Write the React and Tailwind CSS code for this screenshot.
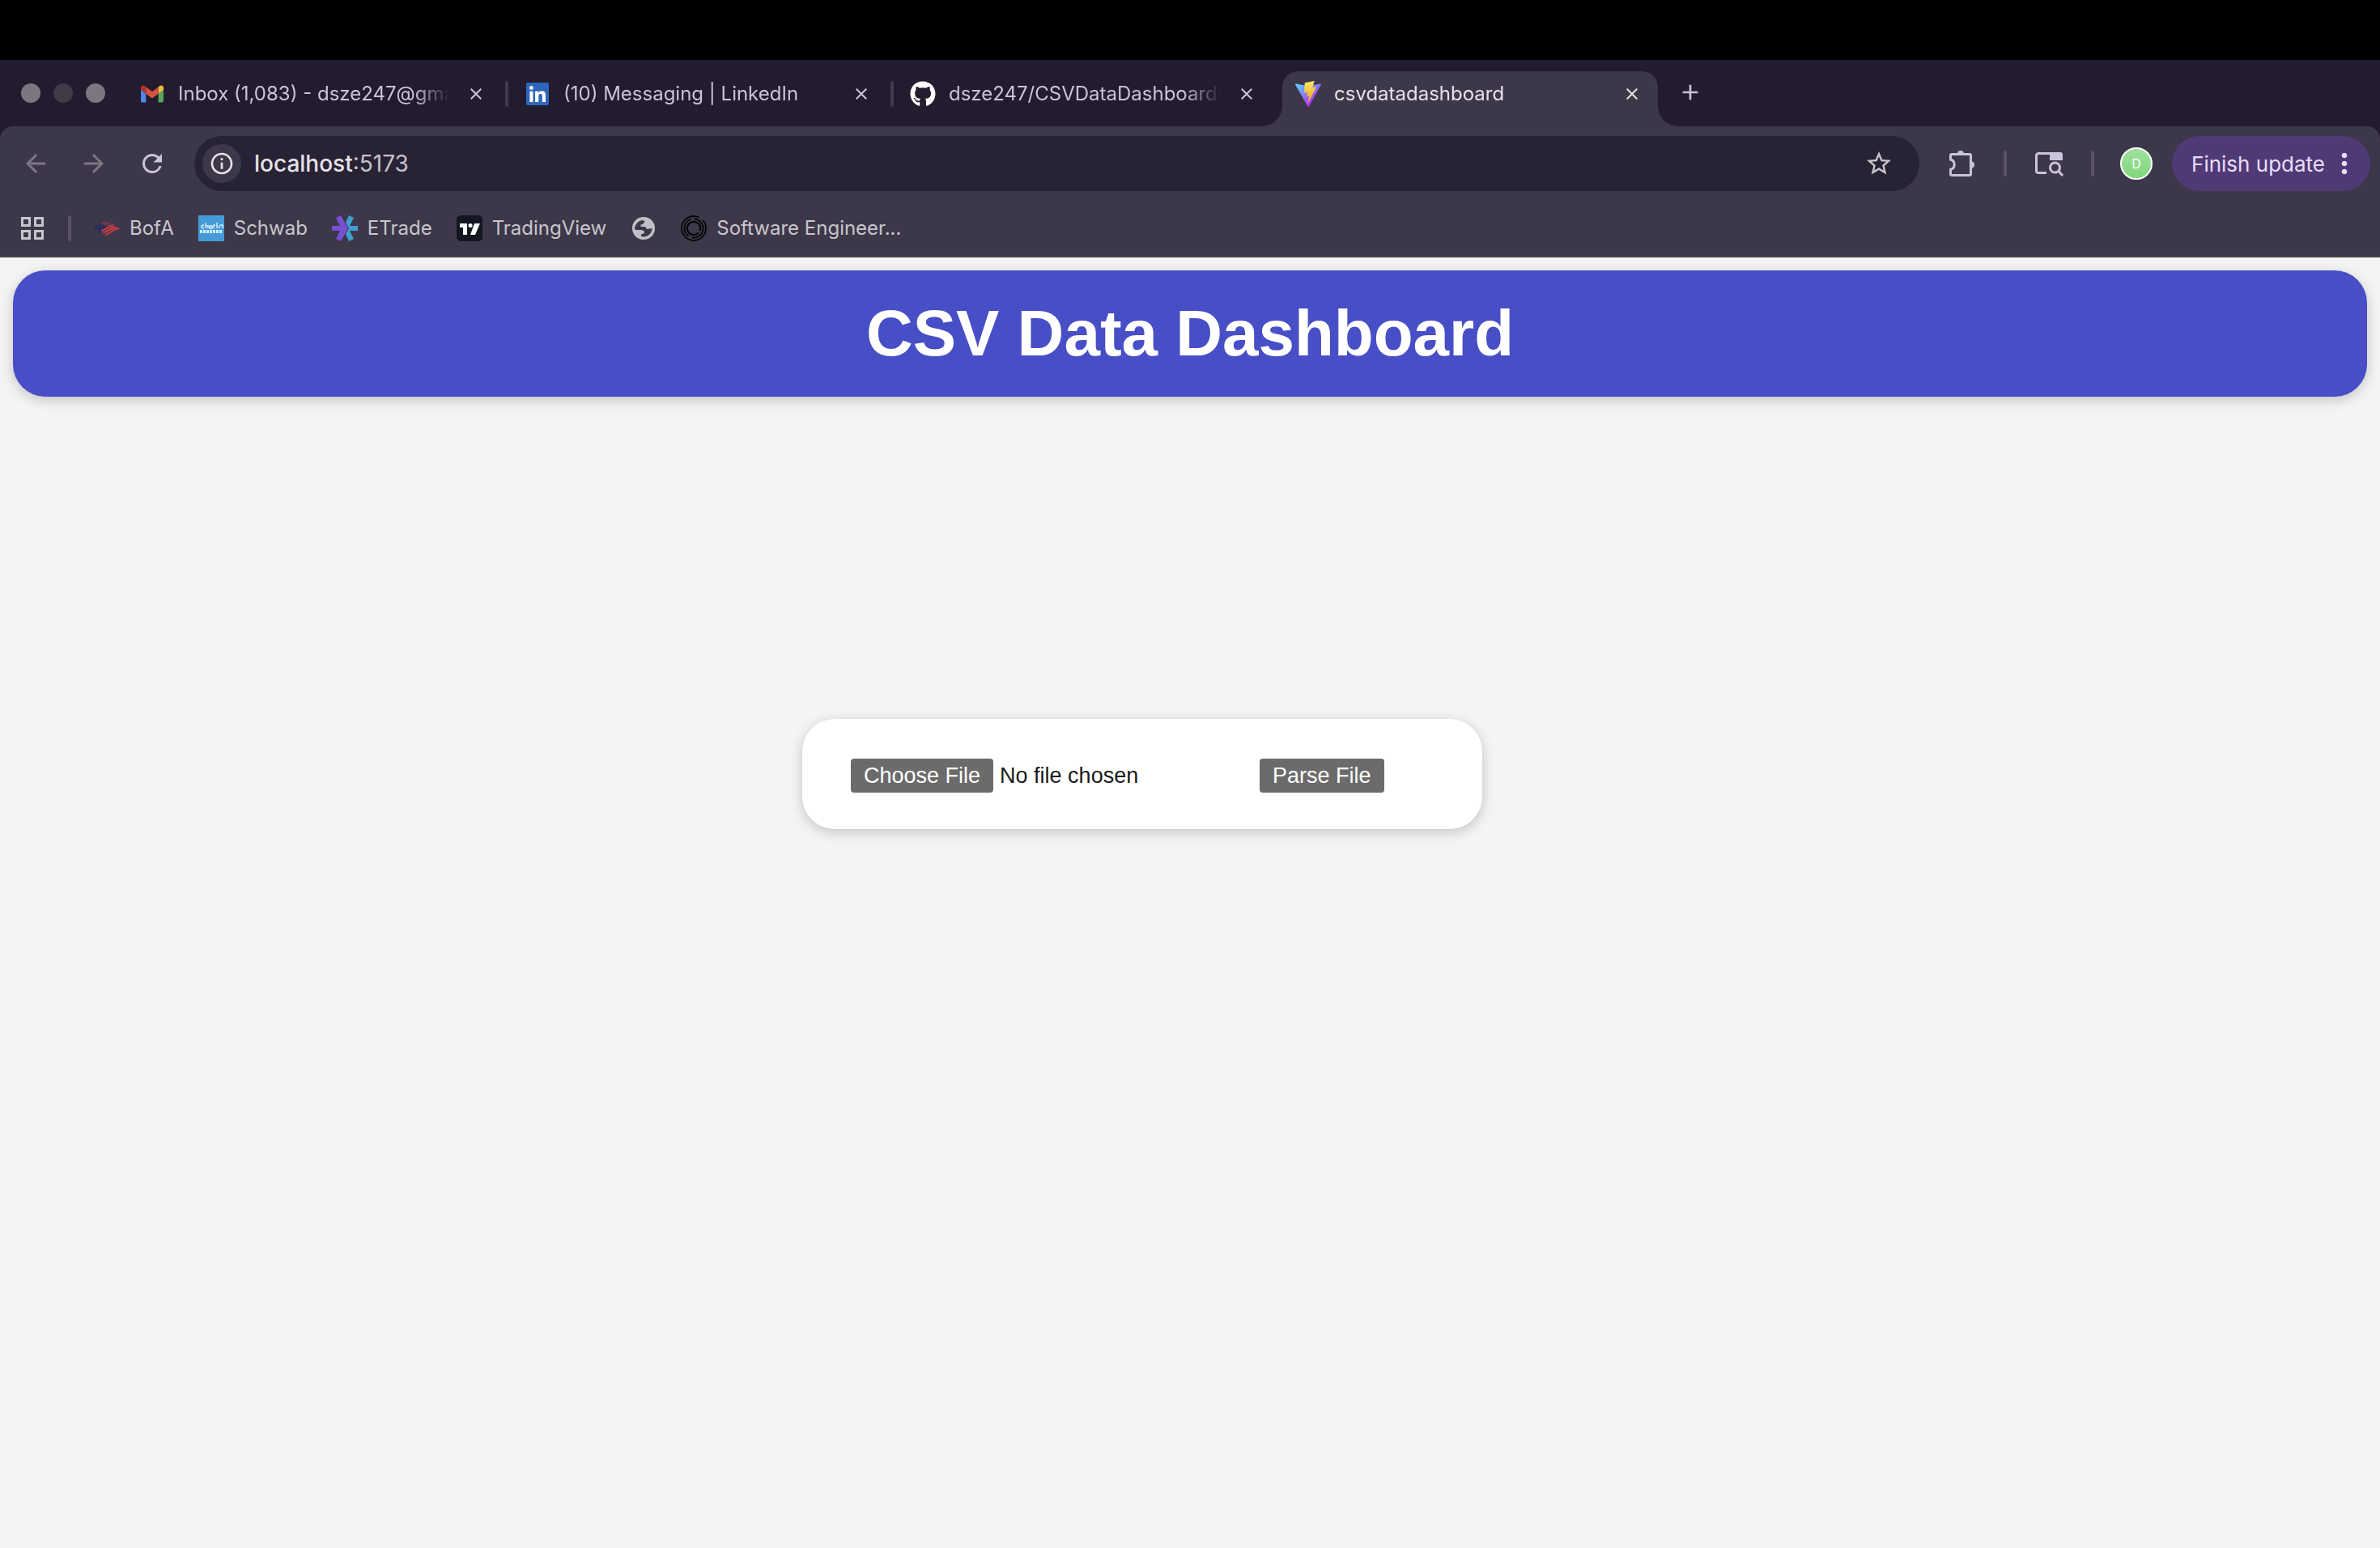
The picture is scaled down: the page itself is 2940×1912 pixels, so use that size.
import React from "react";
import { FaGithub, FaLinkedin } from "react-icons/fa";
import { MdArrowBack, MdArrowForward, MdRefresh, MdInfoOutline, MdStarBorder, MdClose, MdAdd, MdMoreVert } from "react-icons/md";

const GmailIcon = () => (
  <svg viewBox="52 42 88 66" className="w-7 h-6" aria-hidden="true">
    <path fill="#4f86ec" d="M58 108h14V74L52 59v43c0 3.32 2.69 6 6 6" />
    <path fill="#58a55c" d="M120 108h14c3.32 0 6-2.69 6-6V59l-20 15" />
    <path fill="#f2bd42" d="M120 48v26l20-15v-8c0-7.42-8.47-11.65-14.4-7.2" />
    <path fill="#d95140" d="M72 74V48l24 18 24-18v26L96 92" />
    <path fill="#b43428" d="M52 51v8l20 15V48l-5.6-4.2c-5.94-4.45-14.4-.22-14.4 7.2" />
  </svg>
);

const LinkedInIcon = () => (
  <span className="flex size-6 items-center justify-center bg-white">
    <FaLinkedin className="size-8 shrink-0 text-[#2d66bc]" />
  </span>
);

const ViteIcon = () => (
  <svg viewBox="0 0 256 257" className="size-8" aria-hidden="true">
    <defs>
      <linearGradient id="vite-body" x1="0" x2="0.6" y1="0.08" y2="0.8">
        <stop offset="0%" stopColor="#58d0fb" />
        <stop offset="100%" stopColor="#b03bf2" />
      </linearGradient>
      <linearGradient id="vite-bolt" x1="0.43" x2="0.5" y1="0.02" y2="0.9">
        <stop offset="0%" stopColor="#fde870" />
        <stop offset="20%" stopColor="#f9d94f" />
        <stop offset="100%" stopColor="#f2a93b" />
      </linearGradient>
    </defs>
    <path fill="url(#vite-body)" d="M255.153 37.938L134.897 252.976c-2.483 4.44-8.862 4.466-11.382.048L.875 37.958c-2.746-4.814 1.371-10.646 6.827-9.67l120.385 21.517a6.537 6.537 0 0 0 2.322-.004l117.867-21.483c5.438-.991 9.574 4.796 6.877 9.62Z" />
    <path fill="url(#vite-bolt)" d="M185.432.063L96.44 17.501a3.268 3.268 0 0 0-2.634 3.014l-5.474 92.456a3.268 3.268 0 0 0 3.997 3.378l24.777-5.718c2.318-.535 4.413 1.507 3.936 3.838l-7.361 36.047c-.495 2.426 1.782 4.5 4.151 3.78l15.304-4.649c2.372-.72 4.652 1.36 4.15 3.788l-11.698 56.621c-.732 3.542 3.979 5.473 5.943 2.437l1.313-2.028l72.516-144.72c1.215-2.423-.88-5.186-3.54-4.672l-25.505 4.922c-2.396.462-4.435-1.77-3.759-4.114l16.646-57.705c.677-2.35-1.37-4.583-3.769-4.113Z" />
  </svg>
);

const BofAIcon = () => (
  <svg viewBox="0 0 32 32" className="size-8" fill="none" aria-hidden="true">
    <path stroke="#1e2b68" strokeWidth="2" d="M0 15l8-3M3 17.500l10-4M6 20l8-4" />
    <path stroke="#8f3a4c" strokeWidth="1.500" d="M10 10l6-2M13 11.500l7-2M17 13l8-2" />
    <path stroke="#d23a45" strokeWidth="2" d="M9 19c6-1 7-5 15-6M11.500 21.500c6-1 8-6 16-7M14 24c6-1 9-7 17-8" />
  </svg>
);

const SchwabIcon = () => (
  <svg viewBox="0 0 32 32" className="size-8" aria-hidden="true">
    <path fill="#459bd8" d="M0 0h32v32H0z" />
    <g stroke="#d3ecf9" strokeWidth="1.500" fill="none">
      <path d="M7 12c-4 0-4 4 0 4M9 9v7M9 13h3v3M14 13h3v3h-3zM19 16v-4h2M23 9v7M26 12v4M30 16v-4h-3" />
      <path strokeWidth="4" strokeDasharray="3 1" d="M2 20h28" />
    </g>
  </svg>
);

const ETradeIcon = () => (
  <svg viewBox="0 0 32 32" className="size-8" aria-hidden="true">
    <path fill="#429dd0" d="M21 0l6 3-5 10h10v6H22l5 10-6 3-4-9 4-7-4-7z" />
    <path fill="#774fd0" d="M11 0l9 16-9 16-6-3 5-10H0v-6h10L5 3z" />
  </svg>
);

const TradingViewIcon = () => (
  <svg viewBox="0 0 32 32" className="size-8" aria-hidden="true">
    <rect width="32" height="32" rx="5" fill="#131722" />
    <path fill="#fff" d="M4 10h9v14H8v-9H4zM22 10h7l-6 14h-6z" />
    <circle cx="17" cy="12.500" r="2.500" fill="#fff" />
  </svg>
);

const GlobeIcon = () => (
  <svg viewBox="-2 -2 32 32" className="size-8" aria-hidden="true">
    <circle cx="14" cy="14" r="14" fill="#bdc1c6" />
    <path fill="#3d3849" d="M3 14C4 8 8 4.500 13 4l2.500 1.500L13 9l-2.500.500V12H16l2 3 6.500-1C24.500 20 20 24 14.500 24.500L11 24v-2.500l4-1.500-.500-3-3.500-1H4z" />
  </svg>
);

const RingsIcon = () => (
  <svg viewBox="0 0 32 32" className="size-8" fill="none" stroke="#050507" strokeWidth="1.800" aria-hidden="true">
    <circle cx="16" cy="16" r="15" pathLength="100" strokeDasharray="94 6" strokeDashoffset="12" />
    <circle cx="16" cy="16" r="11.600" pathLength="100" strokeDasharray="52 6 36 6" strokeDashoffset="24" />
    <circle cx="16" cy="16" r="8.200" strokeWidth="2.200" pathLength="100" strokeDasharray="94 6" strokeDashoffset="-12" />
  </svg>
);

const AppsIcon = () => (
  <svg viewBox="0 0 28 28" className="size-7" fill="none" stroke="currentColor" strokeWidth="3" aria-hidden="true">
    <path d="M1.500 1.500h9v9h-9zM17.500 1.500h9v9h-9zM1.500 17.500h9v9h-9zM17.500 17.500h9v9h-9z" />
  </svg>
);

const PuzzleIcon = () => (
  <svg viewBox="0 0 34 34" className="size-[34px]" fill="none" stroke="currentColor" strokeWidth="3" aria-hidden="true">
    <path d="M2.500 12V7A1.500 1.500 0 0 1 4 5.500h22A1.500 1.500 0 0 1 27.500 7v23a1.500 1.500 0 0 1-1.500 1.500H4A1.500 1.500 0 0 1 2.500 30v-5.500a6.500 6.500 0 0 0 0-12.500z" />
    <path fill="currentColor" stroke="none" d="M11 5a4 4 0 0 1 8 0zM28 14.500a4 4 0 0 1 0 8z" />
  </svg>
);

const TabSearchIcon = () => (
  <svg viewBox="0 0 36 32" className="w-9 h-8" fill="none" stroke="currentColor" strokeWidth="3" aria-hidden="true">
    <path d="M15 27.500H5A2.500 2.500 0 0 1 2.500 25V6A2.500 2.500 0 0 1 5 3.500h16" />
    <path fill="currentColor" stroke="none" d="M19 2h13a3 3 0 0 1 3 3v7H19z" />
    <circle cx="25.500" cy="21" r="6" />
    <path d="M29.500 25l5.500 6" />
  </svg>
);

const tabs = [
  { title: "Inbox (1,083) - dsze247@gmail.com", icon: <GmailIcon /> },
  { title: "(10) Messaging | LinkedIn", icon: <LinkedInIcon /> },
  { title: "dsze247/CSVDataDashboards", icon: <FaGithub className="size-8 text-white" /> },
  { title: "csvdatadashboard", icon: <ViteIcon />, active: true },
];

const bookmarks = [
  { label: "BofA", icon: <BofAIcon /> },
  { label: "Schwab", icon: <SchwabIcon /> },
  { label: "ETrade", icon: <ETradeIcon /> },
  { label: "TradingView", icon: <TradingViewIcon /> },
  { label: "", name: "Website", icon: <GlobeIcon /> },
  { label: "Software Engineer...", icon: <RingsIcon /> },
];

const Separator = ({ tone = "bg-[#5a5466]" }) => <span className={`h-8 w-1 shrink-0 rounded-full ${tone}`} />;

function Tab({ title, icon, active }) {
  return (
    <div className={active ? "relative flex h-[68px] w-[464px] items-center rounded-t-[20px] bg-[#3d3849] pb-3 pl-4 pr-5" : "flex h-[68px] w-[464px] items-center pb-3 pl-4 pr-5"}>
      {active && (
        <>
          <span className="absolute -left-6 bottom-0 size-6 bg-[radial-gradient(circle_at_0_0,#231c2e_23px,#3d3849_24px)]" />
          <span className="absolute -right-6 bottom-0 size-6 bg-[radial-gradient(circle_at_100%_0,#231c2e_23px,#3d3849_24px)]" />
        </>
      )}
      <button type="button" className={active ? "flex min-w-0 flex-1 items-center gap-4 text-[#e6e1e9]" : "flex min-w-0 flex-1 items-center gap-4 text-[#cac3dc]"}>
        <span className="flex size-8 shrink-0 items-center justify-center">{icon}</span>
        <span className="w-[336px] overflow-hidden whitespace-nowrap text-left text-2xl [mask-image:linear-gradient(to_right,black_290px,transparent_336px)]">{title}</span>
      </button>
      <button type="button" aria-label={`Close ${title}`} className={active ? "text-[#e6e1e9]" : "text-[#cac3dc]"}>
        <MdClose className="size-6" />
      </button>
    </div>
  );
}

export default function App() {
  return (
    <div className="flex min-h-screen flex-col bg-[#f4f4f4] font-['Inter',sans-serif]">
      <div className="h-[74px] bg-black" />

      <div className="bg-[#231c2e]">
        <div className="flex h-[82px] items-end">
          <div className="flex h-full w-[156px] shrink-0 items-center gap-4 pl-[26px]">
            <span className="size-6 rounded-full bg-[#7b7780]" />
            <span className="size-6 rounded-full bg-[#403b4b]" />
            <span className="size-6 rounded-full bg-[#7b7780]" />
          </div>
          {tabs.map((tab, i) => (
            <React.Fragment key={tab.title}>
              <Tab {...tab} />
              {i < tabs.length - 1 && (
                <span className="flex h-[68px] w-3 items-center justify-center pb-3">
                  {i < 2 && <Separator tone="bg-[#413b4c]" />}
                </span>
              )}
            </React.Fragment>
          ))}
          <button type="button" aria-label="New tab" className="ml-6 flex h-[68px] items-center pb-4 text-[#cac3dc]">
            <MdAdd className="size-8" />
          </button>
        </div>

        <div className="rounded-t-2xl border-b-2 border-[#48444d] bg-[#3d3849]">
          <div className="flex items-center pl-7 pr-3 pt-3">
            <div className="flex w-[212px] items-center gap-10">
              <button type="button" aria-label="Back" className="flex size-8 items-center justify-center text-[#7d7687]"><MdArrowBack className="size-9 shrink-0" /></button>
              <button type="button" aria-label="Forward" className="flex size-8 items-center justify-center text-[#7d7687]"><MdArrowForward className="size-9 shrink-0" /></button>
              <button type="button" aria-label="Reload" className="flex size-8 items-center justify-center text-[#cac3dc]"><MdRefresh className="size-9 shrink-0" /></button>
            </div>
            <div className="flex h-[68px] flex-1 items-center rounded-full bg-[#282334] pl-[10px] pr-8">
              <button type="button" aria-label="Site information" className="flex size-12 items-center justify-center rounded-full bg-[#3d3849] text-[#e6e1e9]">
                <MdInfoOutline className="size-8" />
              </button>
              <p className="ml-4 flex-1 text-[28px] text-[#c6c2ca]"><span className="font-medium text-[#e6e1e9]">localhost</span>:5173</p>
              <button type="button" aria-label="Bookmark this page" className="text-[#c9c5cd]"><MdStarBorder className="size-9" /></button>
            </div>
            <div className="flex items-center">
              <button type="button" aria-label="Extensions" className="ml-9 mr-[34px] text-[#cac3dc]"><PuzzleIcon /></button>
              <Separator />
              <button type="button" aria-label="Search tabs" className="mx-[34px] text-[#cac3dc]"><TabSearchIcon /></button>
              <Separator />
              <button type="button" aria-label="Profile" className="ml-8 mr-6 flex size-10 items-center justify-center rounded-full border-2 border-white bg-linear-to-b from-[#9fe09d] to-[#7fd87b] text-base text-white">D</button>
              <button type="button" className="flex h-[68px] items-center gap-1 rounded-full bg-[#503a76] pl-6 pr-3 text-[26px] text-[#e9def8]">
                Finish update
                <MdMoreVert className="size-10" />
              </button>
            </div>
          </div>

          <nav className="flex h-20 items-center pl-[26px] pt-3 text-2xl text-[#c9c5cd]">
            <button type="button" aria-label="All apps"><AppsIcon /></button>
            <span className="ml-[30px] mr-7 flex"><Separator /></span>
            <div className="flex items-center gap-[30px]">
              {bookmarks.map((b) => (
                <a key={b.label || b.name} href="#" aria-label={b.label || b.name} className="flex items-center gap-3">
                  {b.icon}
                  {b.label && <span>{b.label}</span>}
                </a>
              ))}
            </div>
          </nav>
        </div>
      </div>

      <div className="p-4 font-['Liberation_Sans',Arial,sans-serif]">
        <header className="rounded-[40px] bg-[#474ec6] p-8 text-center shadow-[0_4px_16px_rgba(0,0,0,0.2)]">
          <h1 className="text-[80px] font-bold leading-[92px] text-white">CSV Data Dashboard</h1>
        </header>
        <main className="mt-[398px] flex justify-center pr-[118px]">
          <form className="flex h-[136px] w-[840px] items-center rounded-[40px] bg-white px-[60px] pt-1 text-[27px] text-[#1a1a1a] shadow-[0_4px_16px_rgba(0,0,0,0.2)]">
            <input type="file" accept=".csv" aria-label="CSV file" className="w-[505px] file:mr-2 file:h-[42px] file:rounded-sm file:bg-[#6b6b6b] file:px-4 file:text-white" />
            <button type="button" className="h-[42px] rounded-sm bg-[#6b6b6b] px-4 text-white">Parse File</button>
          </form>
        </main>
      </div>
    </div>
  );
}
